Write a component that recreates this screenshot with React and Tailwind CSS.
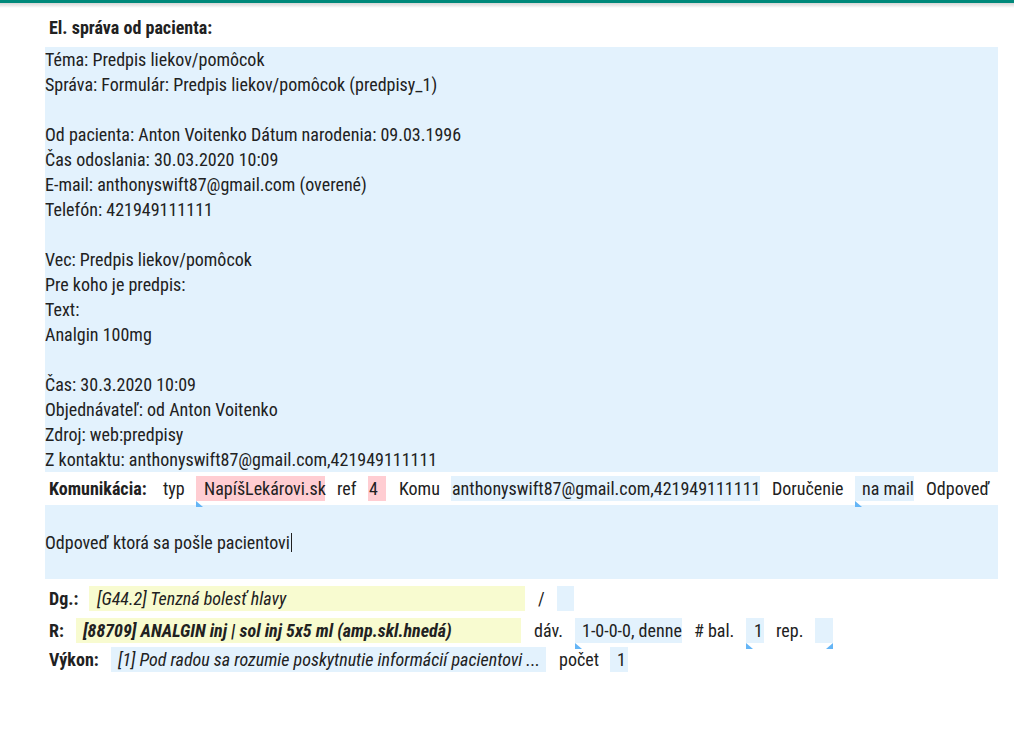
import React from "react";

const lines = [
  "Téma: Predpis liekov/pomôcok",
  "Správa: Formulár: Predpis liekov/pomôcok (predpisy_1)",
  "",
  "Od pacienta: Anton Voitenko Dátum narodenia: 09.03.1996",
  "Čas odoslania: 30.03.2020 10:09",
  "E-mail: anthonyswift87@gmail.com (overené)",
  "Telefón: 421949111111",
  "",
  "Vec: Predpis liekov/pomôcok",
  "Pre koho je predpis:",
  "Text:",
  "Analgin 100mg",
  "",
  "Čas: 30.3.2020 10:09",
  "Objednávateľ: od Anton Voitenko",
  "Zdroj: web:predpisy",
  "Z kontaktu: anthonyswift87@gmail.com,421949111111",
];

function Corner({ right }) {
  return (
    <span
      className={`absolute top-full ${right ? "right-0" : "left-0"} h-0 w-0 border-b-[6px] border-b-[#64b5f6] ${
        right ? "border-l-[7px] border-l-transparent" : "border-r-[7px] border-r-transparent"
      }`}
    />
  );
}

function Field({ color = "blue", className = "", corner, children }) {
  const bg = color === "pink" ? "bg-[#ffcdd2]" : color === "yellow" ? "bg-[#f8fbd0]" : "bg-[#e3f2fd]";
  return (
    <span className={`relative flex h-[25px] shrink-0 items-center whitespace-nowrap ${bg} ${className}`}>
      {children}
      {corner && <Corner right={corner === "right"} />}
    </span>
  );
}

function Label({ className = "", children }) {
  return <span className={`shrink-0 whitespace-nowrap ${className}`}>{children}</span>;
}

export default function App() {
  return (
    <div className="min-h-[736px] bg-white text-[18px] font-stretch-condensed text-[#212121]" style={{ fontFamily: "Roboto, 'Noto Sans', sans-serif" }}>
      <div className="h-[3px] bg-[#00897b]" />
      <div className="h-[5px] bg-gradient-to-b from-[#d6d6d6] to-white" />

      <div className="pl-[45px] pr-[16px]">
        <div className="flex h-[39px] items-center pl-[4px] font-bold">El. správa od pacienta:</div>

        <div className="bg-[#e3f2fd]">
          {lines.map((l, i) => (
            <div key={i} className="h-[25px] leading-[25px]">
              {l || "\u00a0"}
            </div>
          ))}
        </div>

        {/* komunikácia */}
        <div className="mt-[4px] flex h-[25px] items-center">
          <Label className="ml-[4px] w-[114px] font-bold">Komunikácia:</Label>
          <Label className="w-[33px]">typ</Label>
          <Field color="pink" corner="left" className="w-[129px] pl-[8px]">NapíšLekárovi.sk</Field>
          <Label className="ml-[12px] w-[31px]">ref</Label>
          <Field color="pink" className="w-[18px] pl-[1px]">4</Field>
          <Label className="ml-[13px] w-[52px]">Komu</Label>
          <Field className="w-[309px] pl-[1px]">anthonyswift87@gmail.com,421949111111</Field>
          <Label className="ml-[12px] w-[83px]">Doručenie</Label>
          <Field corner="left" className="w-[59px] pl-[7px]">na mail</Field>
          <Label className="ml-[12px]">Odpoveď</Label>
        </div>

        <div className="mt-[4px] flex h-[74px] items-center bg-[#e3f2fd]">
          <span>Odpoveď ktorá sa pošle pacientovi</span>
          <span className="ml-[1px] h-[19px] w-px bg-[#212121]" />
        </div>

        {/* diagnóza */}
        <div className="mt-[7px] flex h-[25px] items-center">
          <Label className="ml-[4px] w-[40px] font-bold">Dg.:</Label>
          <Field color="yellow" className="w-[436px] pl-[8px] italic">[G44.2] Tenzná bolesť hlavy</Field>
          <Label className="ml-[13px] w-[19px]">/</Label>
          <Field className="w-[17px]" />
        </div>

        {/* recept */}
        <div className="mt-[7px] flex h-[25px] items-center">
          <Label className="ml-[4px] w-[27px] font-bold">R:</Label>
          <Field color="yellow" className="w-[445px] pl-[7px] font-bold italic">[88709] ANALGIN inj | sol inj 5x5 ml (amp.skl.hnedá)</Field>
          <Label className="ml-[13px] w-[41px]">dáv.</Label>
          <Field corner="left" className="w-[107px] pl-[7px]">1-0-0-0, denne</Field>
          <Label className="ml-[12px] w-[52px]"># bal.</Label>
          <Field corner="left" className="w-[18px] pl-[8px]">1</Field>
          <Label className="ml-[12px] w-[39px]">rep.</Label>
          <Field corner="right" className="w-[18px]" />
        </div>

        {/* výkon */}
        <div className="mt-[4px] flex h-[25px] items-center">
          <Label className="ml-[4px] w-[62px] font-bold">Výkon:</Label>
          <Field className="w-[435px] pl-[7px] italic">[1] Pod radou sa rozumie poskytnutie informácií pacientovi ...</Field>
          <Label className="ml-[13px] w-[51px]">počet</Label>
          <Field className="w-[18px] pl-[7px]">1</Field>
        </div>
      </div>
    </div>
  );
}
